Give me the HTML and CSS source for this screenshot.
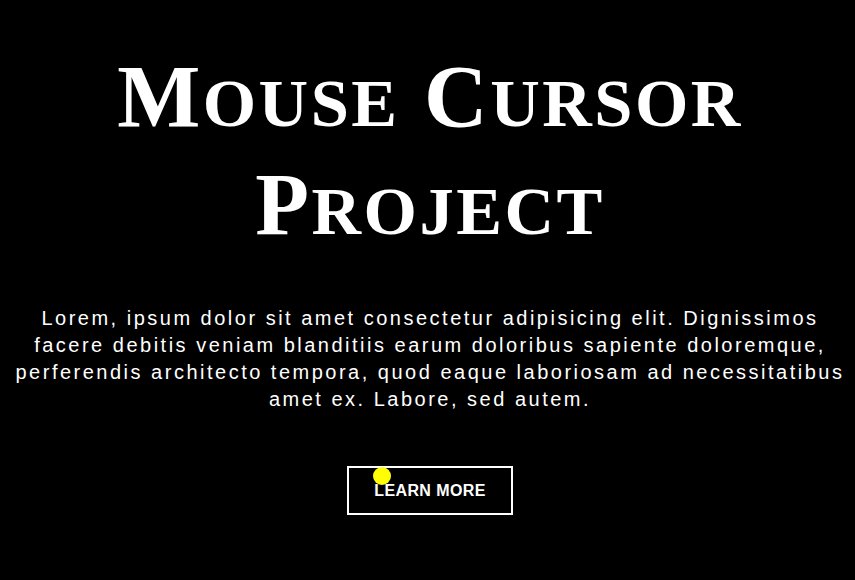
FILE: index.html
```html
<!DOCTYPE html>
<html>
<head>
<meta charset="utf-8">
<link rel="stylesheet" href="styles.css">
</head>
<body>
<main class="hero">
  <h1 class="title">M<span class="sc">ouse</span> C<span class="sc">ursor</span><br>P<span class="sc">roject</span></h1>
  <p class="lead">Lorem, ipsum dolor sit amet consectetur adipisicing elit. Dignissimos facere debitis veniam blanditiis earum doloribus sapiente doloremque, perferendis architecto tempora, quod eaque laboriosam ad necessitatibus amet ex. Labore, sed autem.</p>
  <a class="btn" href="#">Learn More</a>
</main>
<div class="cursor"></div>
</body>
</html>
```
FILE: styles.css
```css
html, body {
  margin: 0;
  padding: 0;
  background: #000;
  height: 100%;
}
body {
  color: #fff;
  font-family: "Liberation Sans", Arial, sans-serif;
  overflow: hidden;
}
.hero {
  display: flex;
  flex-direction: column;
  align-items: center;
  text-align: center;
  padding: 43px 6px 0 11px;
}
.title {
  margin: 0;
  font-family: "Liberation Serif", "Times New Roman", serif;
  font-weight: bold;
  text-transform: uppercase;
  font-size: 88px;
  line-height: 108px;
  letter-spacing: 2.5px;
}
.title .sc {
  font-size: 0.78em;
  line-height: 1;
}
.lead {
  margin: 46px 0 0;
  font-size: 20px;
  line-height: 27px;
  letter-spacing: 2.5px;
  max-width: 836px;
}
.btn {
  margin-top: 53px;
  display: inline-block;
  width: 162px;
  height: 45px;
  line-height: 45px;
  border: 2px solid #fff;
  color: #fff;
  text-decoration: none;
  text-transform: uppercase;
  font-weight: bold;
  font-size: 16px;
  letter-spacing: 0.4px;
}
.cursor {
  position: absolute;
  left: 373px;
  top: 467px;
  width: 18px;
  height: 18px;
  border-radius: 50%;
  background: #ffff00;
}
```
